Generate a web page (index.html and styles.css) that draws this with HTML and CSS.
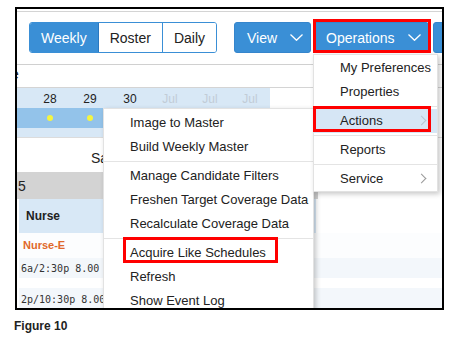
FILE: index.html
```html
<!DOCTYPE html>
<html lang="en">
<head>
    <meta charset="UTF-8">
    <title>Figure 10</title>
    <link rel="stylesheet" href="styles.css">
</head>
<body>

<div class="shot">
    <div class="topline"></div>

    <div class="toolbar">
        <div class="seg">
            <button class="seg-btn active">Weekly</button>
            <button class="seg-btn">Roster</button>
            <button class="seg-btn">Daily</button>
        </div>
        <button class="drop view">View
            <svg class="chev" width="13" height="7" viewBox="0 0 13 7"><polyline points="0.5,0.5 6.5,6.3 12.5,0.5" /></svg>
        </button>
        <button class="drop ops">Operations
            <svg class="chev" width="13" height="7" viewBox="0 0 13 7"><polyline points="0.5,0.5 6.5,6.3 12.5,0.5" /></svg>
        </button>
        <button class="drop more"></button>
    </div>

    <div class="crumb">e</div>

    <div class="dates">
        <span class="stub"></span>
        <span class="day">28</span>
        <span class="day">29</span>
        <span class="day">30</span>
        <span class="day muted">Jul</span>
        <span class="day muted">Jul</span>
        <span class="day muted">Jul</span>
    </div>
    <div class="dots">
        <span class="stub"></span>
        <span class="day"><i class="dot"></i></span>
        <span class="day"><i class="dot"></i></span>
        <span class="day"></span>
    </div>
    <div class="under"></div>

    <div class="dayrow">Sat</div>
    <div class="unit">5</div>
    <div class="role">Nurse</div>
    <div class="shift-name">Nurse-E</div>
    <div class="shift">6a/2:30p 8.00</div>
    <div class="shift second">2p/10:30p 8.00</div>

    <!-- Operations > Actions submenu -->
    <ul class="menu actions-menu">
        <li>Image to Master</li>
        <li>Build Weekly Master</li>
        <li class="sep"></li>
        <li>Manage Candidate Filters</li>
        <li>Freshen Target Coverage Data</li>
        <li>Recalculate Coverage Data</li>
        <li class="sep"></li>
        <li>Acquire Like Schedules</li>
        <li>Refresh</li>
        <li>Show Event Log</li>
    </ul>

    <!-- Operations menu -->
    <ul class="menu ops-menu">
        <li>My Preferences</li>
        <li>Properties</li>
        <li class="sep"></li>
        <li class="hover sub">Actions</li>
        <li class="sep"></li>
        <li>Reports</li>
        <li class="sep"></li>
        <li class="sub">Service</li>
    </ul>

    <div class="mark mark-ops"></div>
    <div class="mark mark-actions"></div>
    <div class="mark mark-acquire"></div>
</div>

<p class="caption">Figure 10</p>

</body>
</html>
```

FILE: styles.css
```css
body {
    margin: 0;
    padding: 7px 0 0 15px;
    font-family: "Liberation Sans", Arial, sans-serif;
    color: #222;
}
.shot {
    position: relative;
    box-sizing: border-box;
    width: 429px;
    height: 303px;
    border: 2px solid #000;
    background: #fff;
    overflow: hidden;
}
.topline {
    height: 2px;
    border-bottom: 1px solid #d4d4d4;
}

/* toolbar */
.toolbar {
    display: flex;
    height: 42px;
    padding: 10px 0 0 12px;
    border-bottom: 1px solid #d0d0d0;
    white-space: nowrap;
}
.toolbar > * {
    flex-shrink: 0;
}
.seg {
    display: flex;
    height: 31px;
    border: 1px solid #3a8fd6;
    border-radius: 3px;
    box-sizing: border-box;
    overflow: hidden;
}
.seg-btn {
    font-family: inherit;
    font-size: 14px;
    color: #222;
    background: #fff;
    border: 0;
    border-left: 1px solid #3a8fd6;
    padding: 0 11px;
    margin: 0;
}
.seg-btn:first-child {
    border-left: 0;
}
.seg-btn.active {
    background: #3a8fd6;
    color: #fff;
    border-right: 1px solid #2b78bf;
}
.seg-btn.active + .seg-btn {
    border-left: 0;
}
.drop {
    display: flex;
    align-items: center;
    height: 31px;
    box-sizing: border-box;
    font-family: inherit;
    font-size: 14px;
    color: #fff;
    background: #3a8fd6;
    border: 1px solid #3585cc;
    border-radius: 3px;
    padding: 0 7px 0 12px;
    margin: 0;
}
.drop.view {
    margin-left: 17px;
    width: 77px;
}
.drop.ops {
    margin-left: 2px;
    width: 116px;
}
.drop.more {
    margin-left: 4px;
    width: 60px;
}
.chev {
    margin-left: auto;
    fill: none;
    stroke: #fff;
    stroke-width: 1.3;
}

.crumb {
    height: 22px;
    line-height: 19px;
    font-size: 14px;
    margin-left: -6px;
    border-bottom: 1px solid #d4d4d4;
}

/* calendar strip */
.dates, .dots {
    display: flex;
    width: 253px;
    background: #d8e8f6;
}
.dates {
    height: 20px;
    line-height: 22px;
    font-size: 12px;
}
.dots {
    height: 20px;
    background: #93c3ea;
}
.under {
    height: 9px;
    border-bottom: 1px solid #dcdcdc;
    background: linear-gradient(to right, #d8e8f6 253px, #fff 253px);
}
.stub {
    width: 13px;
}
.day {
    width: 40px;
    text-align: center;
}
.day.muted {
    color: #c2ccd6;
}
.dots .day {
    display: flex;
    align-items: center;
    justify-content: center;
}
.dot {
    width: 6px;
    height: 6px;
    border-radius: 50%;
    background: #f4f542;
}

.dayrow {
    height: 34px;
    box-sizing: border-box;
    padding: 11px 0 0 74px;
    font-size: 14px;
    line-height: 18px;
}
.unit {
    height: 27px;
    line-height: 28px;
    background: #d3d3d3;
    font-size: 14px;
    padding-left: 1px;
    width: 300px;
}
.role {
    margin-left: 2px;
    width: 290px;
    height: 34px;
    line-height: 34px;
    padding-left: 7px;
    background: #d8e8f6;
    font-size: 12px;
    font-weight: bold;
}
.shift-name {
    margin-left: 2px;
    height: 25px;
    line-height: 25px;
    padding-left: 4px;
    background: #fcfdfe;
    color: #e0692b;
    font-size: 11px;
    font-weight: bold;
}
.shift {
    margin-left: 2px;
    height: 20px;
    line-height: 22px;
    padding-left: 2px;
    background: #f3f7fb;
    font-family: "DejaVu Sans Mono", monospace;
    font-size: 10px;
    color: #333;
}
.shift.second {
    margin-top: 10px;
    height: 24px;
    line-height: 24px;
}

/* dropdown menus */
.menu {
    position: absolute;
    margin: 0;
    padding: 2px 0 0;
    list-style: none;
    background: #fff;
    border: 1px solid #e2e2e2;
    box-shadow: 2px 2px 5px rgba(0, 0, 0, 0.22);
    font-size: 13px;
    color: #222;
    box-sizing: border-box;
}
.menu li {
    position: relative;
    height: 24px;
    line-height: 24px;
    padding-left: 26px;
    white-space: nowrap;
}
.menu li.sep {
    height: 1px;
    margin: 2px 0;
    padding: 0;
    background: #e4e4e4;
}
.menu li.hover {
    background: #d6e6f5;
}
.menu li.sub::after {
    content: "";
    position: absolute;
    right: 12px;
    top: 8px;
    width: 6px;
    height: 6px;
    border-top: 1px solid #999;
    border-right: 1px solid #999;
    transform: rotate(45deg);
}
.menu li.hover::after {
    border-color: #b8c4d0;
}
.actions-menu {
    left: 86px;
    top: 99px;
    width: 211px;
    height: 230px;
}
.ops-menu {
    left: 296px;
    top: 45px;
    width: 125px;
    padding-top: 1px;
}

/* red callouts */
.mark {
    position: absolute;
    box-sizing: border-box;
    border: 3px solid #f00;
}
.mark-ops {
    left: 296px;
    top: 10px;
    width: 118px;
    height: 34px;
}
.mark-actions {
    left: 296px;
    top: 97px;
    width: 118px;
    height: 26px;
}
.mark-acquire {
    left: 106px;
    top: 228px;
    width: 155px;
    height: 26px;
}

.caption {
    margin: 9px 0 0 -1px;
    font-size: 12px;
    font-weight: bold;
}
```
